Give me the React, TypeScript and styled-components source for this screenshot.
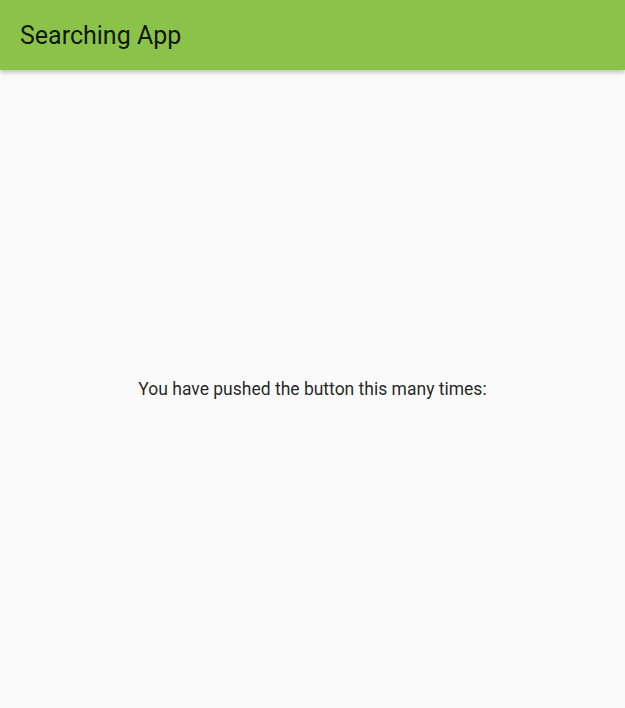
import React from "react";
import styled, { createGlobalStyle } from "styled-components";

const Global = createGlobalStyle`
  html, body { margin: 0; padding: 0; height: 100%; }
  body { background: #fafafa; font-family: Roboto, "Noto Sans", sans-serif; }
  #root { height: 100%; }
`;

const Page = styled.div`
  height: 708px;
  display: flex;
  flex-direction: column;
  background: #fafafa;
`;

const AppBar = styled.header`
  height: 70px;
  flex: none;
  background: #8bc34a;
  display: flex;
  align-items: center;
  padding: 0 20px;
  box-shadow: 0 2px 4px rgba(0, 0, 0, 0.16), 0 4px 5px rgba(0, 0, 0, 0.08);
  position: relative;
  z-index: 1;
`;

const Title = styled.h1`
  margin: 0;
  font-size: 25px;
  font-weight: 400;
  color: rgba(0, 0, 0, 0.9);
  letter-spacing: 0;
`;

const Body = styled.main`
  flex: 1;
  display: flex;
  align-items: center;
  justify-content: center;
`;

const Message = styled.p`
  margin: 0;
  font-size: 17.5px;
  color: rgba(0, 0, 0, 0.87);
`;

export default function App() {
  return (
    <Page>
      <Global />
      <AppBar>
        <Title>Searching App</Title>
      </AppBar>
      <Body>
        <Message>You have pushed the button this many times:</Message>
      </Body>
    </Page>
  );
}
